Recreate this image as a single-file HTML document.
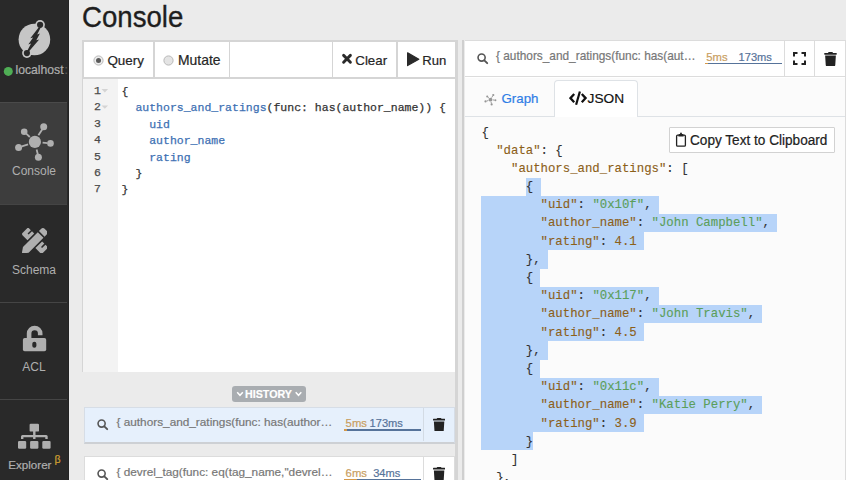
<!DOCTYPE html>
<html><head><meta charset="utf-8">
<style>
*{box-sizing:border-box;margin:0;padding:0}
html,body{width:846px;height:480px;overflow:hidden;background:#ebebeb;font-family:"Liberation Sans",sans-serif;color:#222;position:relative}
div,span,svg{position:absolute}
.t{white-space:pre;line-height:1;-webkit-text-stroke:0.2px currentColor}
#side{left:0;top:0;width:68.5px;height:480px;background:#292929;border-right:1.6px solid #232323}
.lbl{left:0;width:68px;text-align:center;color:#afafaf;font-size:12px;white-space:pre;line-height:1}
.mono{font-family:"Liberation Mono",monospace;white-space:pre;-webkit-text-stroke:0.25px currentColor}
</style></head><body>
<!-- SIDEBAR -->
<div id="side">
  <svg style="left:0;top:0.8px" width="69" height="100" viewBox="0 0 69 100">
    <circle cx="34.4" cy="38.5" r="15.8" fill="#c6c6c6"/>
    <circle cx="40.1" cy="23.8" r="4.8" fill="#c6c6c6"/>
    <circle cx="40.1" cy="23.8" r="3.1" fill="#292929"/>
    <circle cx="26.9" cy="52.1" r="4.8" fill="#c6c6c6"/>
    <circle cx="26.9" cy="52.1" r="3.1" fill="#292929"/>
    <polygon fill="#292929" points="38.8,26.2 30.3,37.3 33.1,36.5 28.3,43.4 31.1,42.5 26.6,51 28.0,51.6 39.2,38.5 36.3,39.3 39.9,32.5 37.2,33.4 40.6,26.8"/>
  </svg>
  <svg style="left:0;top:60px" width="69" height="20" viewBox="0 60 69 20">
    <circle cx="8.3" cy="71.4" r="4.5" fill="#4fae55"/>
  </svg>
  <div class="t" style="left:15.5px;top:64.4px;font-size:12.2px;color:#afafaf">localhost</div><div class="t" style="left:64.6px;top:64.4px;font-size:12.2px;color:#5a5a5a">:</div>

  <div style="left:0;top:101.5px;width:67.3px;height:103px;background:#3d3d3d;border-top:1px solid #4a4a4a;border-bottom:1px solid #444"></div>
  <svg style="left:0;top:115px" width="69" height="50" viewBox="0 115 69 50">
    <defs><g id="net">
      <circle cx="34.9" cy="141.9" r="6.1" stroke="none"/>
      <circle cx="43.7" cy="126.8" r="3.5" stroke="none"/>
      <circle cx="24.2" cy="131.8" r="3.3" stroke="none"/>
      <circle cx="50.5" cy="143.4" r="3.3" stroke="none"/>
      <circle cx="18.6" cy="147.4" r="3.5" stroke="none"/>
      <circle cx="38.4" cy="157.2" r="3.5" stroke="none"/>
      <path fill="none" d="M42.5 128.9 L38.4 135.3 M25.9 133.4 L29.8 137 M47.6 143.2 L42.6 142.7 M21.8 146.4 L28.1 144.4 M37.8 154.2 L36.6 149.5"/>
    </g></defs>
    <g fill="#afafaf" stroke="#afafaf" stroke-width="1.8"><use href="#net"/></g>
  </svg>
  <div class="lbl" style="top:165.1px">Console</div>

  <svg style="left:21.5px;top:227.5px" width="25.6" height="25.6" viewBox="0 0 512 512">
    <path fill="#afafaf" d="M109.46 244.04l134.58-134.56-44.12-44.12-61.68 61.68a7.919 7.919 0 0 1-11.21 0l-11.21-11.21c-3.1-3.1-3.1-8.120 0-11.21l61.68-61.68-33.64-33.65C131.47-3.1 111.39-3.1 99 9.29L9.290 99c-12.38 12.39-12.39 32.47 0 44.86l100.17 100.18zm388.47-116.8c18.76-18.76 18.75-49.17 0-67.93l-45.25-45.25c-18.76-18.76-49.18-18.760-67.950 0l-46.02 46.01 113.2 113.2 46.02-46.03zM316.08 82.71l-297 296.96L.32 487.11c-2.53 14.49 10.09 27.11 24.59 24.56l107.45-18.84 296.99-297-113.27-113.12zm186.63 285.43l-33.64-33.64-61.68 61.68c-3.1 3.1-8.12 3.1-11.21 0l-11.21-11.21c-3.09-3.1-3.09-8.12 0-11.21l61.68-61.68-44.14-44.140L267.93 402.5l100.21 100.2c12.39 12.39 32.47 12.39 44.86 0l89.71-89.7c12.39-12.39 12.39-32.47 0-44.86z"/>
  </svg>
  <div class="lbl" style="top:263.5px">Schema</div>
  <div style="left:0;top:301.5px;width:67.4px;height:1.2px;background:#454545"></div>

  <svg style="left:0;top:320px" width="69" height="36" viewBox="0 320 69 36">
    <path fill="none" stroke="#afafaf" stroke-width="4.6" d="M29.1 339 V333.6 a5.55 5.55 0 0 1 11.1 0 V335.2"/>
    <rect x="22.9" y="338" width="23.3" height="13.2" rx="1.8" fill="#afafaf"/>
    <rect x="32.3" y="341.8" width="4.1" height="6" rx="2" fill="#292929"/>
  </svg>
  <div class="lbl" style="top:361px">ACL</div>
  <div style="left:0;top:398.6px;width:67.4px;height:1.2px;background:#454545"></div>

  <svg style="left:0;top:420px" width="69" height="32" viewBox="0 420 69 32">
    <g fill="#afafaf">
      <rect x="29.6" y="423.8" width="9.4" height="7.8" rx="1.2"/>
      <rect x="33.1" y="431" width="2.4" height="4.5"/>
      <path d="M21 439 V436.5 a1.5 1.5 0 0 1 1.5 -1.5 H46.2 a1.5 1.5 0 0 1 1.5 1.5 V439 h-2.4 v-1.8 H23.4 V439 Z"/>
      <rect x="33.1" y="436" width="2.4" height="3"/>
      <rect x="18" y="440.9" width="8.2" height="7.9" rx="1.2"/>
      <rect x="30.1" y="440.9" width="8.3" height="7.9" rx="1.2"/>
      <rect x="42.3" y="440.9" width="8.3" height="7.9" rx="1.2"/>
    </g>
  </svg>
  <div class="t" style="left:8.3px;top:458.5px;font-size:11.6px;color:#afafaf">Explorer</div>
  <div class="t" style="left:54.6px;top:454.3px;font-size:10.6px;color:#d1a032">β</div>
</div>

<!-- TITLE -->
<div class="t" style="left:82px;top:3.2px;font-size:29px;color:#1e1e1e;transform:scaleX(0.952);transform-origin:0 0;-webkit-text-stroke:0.35px #1e1e1e">Console</div>

<!-- LEFT PANE -->
<div style="left:82px;top:40px;width:374px;height:332px;background:#fff;border-top:2px solid #d5d5d5;border-left:1.1px solid #d5d5d5"></div><div style="left:82px;top:40px;width:2px;height:38px;background:#d5d5d5"></div>
<div style="left:455.1px;top:40px;width:2.8px;height:440px;background:#d5d5d5"></div>
<!-- toolbar -->
<div style="left:82px;top:76.8px;width:374px;height:2px;background:#d5d5d5"></div>
<div style="left:152.5px;top:41px;width:2px;height:36px;background:#d5d5d5"></div>
<div style="left:228.8px;top:41px;width:1.4px;height:36px;background:#d5d5d5"></div>
<div style="left:332px;top:41px;width:1.4px;height:36px;background:#d5d5d5"></div>
<div style="left:396.2px;top:41px;width:2px;height:36px;background:#d5d5d5"></div>
<svg style="left:92.5px;top:54.5px" width="12" height="12" viewBox="0 0 12 12"><circle cx="5.5" cy="5.5" r="4.6" fill="#ececec" stroke="#b8b8b8" stroke-width="1"/><circle cx="5.5" cy="5.5" r="2.5" fill="#5a5a5a"/></svg>
<div class="t" style="left:107.4px;top:53.6px;font-size:13.45px;color:#262626">Query</div>
<svg style="left:162.8px;top:54.7px" width="12" height="12" viewBox="0 0 12 12"><circle cx="5.5" cy="5.5" r="4.6" fill="#e4e4e4" stroke="#b8b8b8" stroke-width="1"/></svg>
<div class="t" style="left:178px;top:53.5px;font-size:13.9px;color:#262626">Mutate</div>
<svg style="left:341px;top:53.4px" width="12" height="12" viewBox="0 0 12 12"><path d="M2.6 2.4 L9.4 9.2 M9.4 2.4 L2.6 9.2" stroke="#2a2a2a" stroke-width="2.9" stroke-linecap="round"/></svg>
<div class="t" style="left:355.3px;top:53.7px;font-size:13.3px;color:#262626">Clear</div>
<svg style="left:405.5px;top:51px" width="14" height="16" viewBox="0 0 14 16"><path d="M1.6 1.8 L12.8 8.2 L1.6 14.6 Z" fill="#2a2a2a" stroke="#2a2a2a" stroke-width="1.2" stroke-linejoin="round"/></svg>
<div class="t" style="left:422.3px;top:53.7px;font-size:13.1px;color:#262626">Run</div>
<!-- editor -->
<div style="left:83.1px;top:78.8px;width:34.8px;height:293.2px;background:#f3f3f3"></div>
<div class="mono" style="left:83.6px;top:82.7px;width:17.3px;text-align:right;font-size:11.5px;line-height:16.45px;color:#4a4a4a">1
2
3
4
5
6
7</div>
<svg style="left:101px;top:88px" width="8" height="24" viewBox="0 0 8 24"><path d="M0.5 1.1 h6.6 l-3.3 3.3z M0.5 17.5 h6.6 l-3.3 3.3z" fill="#d4d4d4"/></svg>
<div class="mono" style="left:121.6px;top:83.7px;font-size:11.5px;line-height:16.45px;color:#333">{
  <span style="position:static;color:#3d70b3">authors_and_ratings</span>(func: has(author_name)) {
    <span style="position:static;color:#3d70b3">uid</span>
    <span style="position:static;color:#3d70b3">author_name</span>
    <span style="position:static;color:#3d70b3">rating</span>
  }
}</div>

<!-- HISTORY -->
<div style="left:232px;top:386px;width:74px;height:15.6px;background:#a9adb1;border-radius:3px"></div>
<svg style="left:236px;top:389px" width="70" height="10" viewBox="0 0 70 10"><path d="M1.2 3.3 L4 6.3 L6.8 3.3 M59.7 3.3 L62.5 6.3 L65.3 3.3" fill="none" stroke="#fff" stroke-width="1.5"/></svg>
<div class="t" style="left:245px;top:388.6px;font-size:10.7px;font-weight:bold;color:#fff">HISTORY</div>

<div style="left:83.8px;top:406.6px;width:370.8px;height:37px;background:#e6f0fc;border:1px solid #d6dde6;border-bottom:2px solid #cdd0d4"></div>
<div style="left:423px;top:407.5px;width:1px;height:33px;background:#d3dbe4"></div>
<svg style="left:96.65px;top:418.65px" width="12" height="12" viewBox="0 0 12 12"><circle cx="4.6" cy="4.6" r="3.55" fill="none" stroke="#555" stroke-width="1.6"/><path d="M7.3 7.3 L10.2 10.2" stroke="#555" stroke-width="1.9" stroke-linecap="round"/></svg>
<div class="t" style="left:116.5px;top:417px;font-size:11.8px;color:#777">{ authors_and_ratings(func: has(author…</div>
<div class="t" style="left:345.6px;top:417.6px;font-size:11.3px;color:#c99e5f">5ms</div>
<div class="t" style="left:369.6px;top:417.6px;font-size:11.1px;color:#56739a">173ms</div>
<div style="left:343.8px;top:429.4px;width:77.3px;height:1.5px;background:#56739a"></div>
<div style="left:343.8px;top:429.4px;width:3px;height:1.5px;background:#d69a4a"></div>
<svg style="left:433.1px;top:417.5px" width="12.2" height="13.9" viewBox="0 0 448 512"><path fill="#222" d="M432 32H312l-9.4-18.7A24 24 0 0 0 281.1 0H166.8a23.72 23.72 0 0 0-21.4 13.3L136 32H16A16 16 0 0 0 0 48v32a16 16 0 0 0 16 16h416a16 16 0 0 0 16-16V48a16 16 0 0 0-16-16zM53.2 467a48 48 0 0 0 47.9 45h245.8a48 48 0 0 0 47.9-45L416 128H32z"/></svg>

<div style="left:83.8px;top:455.8px;width:370.8px;height:37px;background:#fff;border:1px solid #dcdcdc"></div>
<div style="left:423px;top:457px;width:1px;height:33px;background:#dcdcdc"></div>
<svg style="left:96.65px;top:468.55px" width="12" height="12" viewBox="0 0 12 12"><circle cx="4.6" cy="4.6" r="3.55" fill="none" stroke="#555" stroke-width="1.6"/><path d="M7.3 7.3 L10.2 10.2" stroke="#555" stroke-width="1.9" stroke-linecap="round"/></svg>
<div class="t" style="left:116.5px;top:466.8px;font-size:11.8px;color:#777">{ devrel_tag(func: eq(tag_name,"devrel…</div>
<div class="t" style="left:345.6px;top:467.6px;font-size:11.3px;color:#c99e5f">6ms</div>
<div class="t" style="left:373.2px;top:467.6px;font-size:11.1px;color:#56739a">34ms</div>
<div style="left:343.8px;top:478.8px;width:77.3px;height:1.5px;background:#56739a"></div>
<div style="left:343.8px;top:478.8px;width:12.8px;height:1.5px;background:#d69a4a"></div>
<svg style="left:433.1px;top:467px" width="12.2" height="13.9" viewBox="0 0 448 512"><path fill="#222" d="M432 32H312l-9.4-18.7A24 24 0 0 0 281.1 0H166.8a23.72 23.72 0 0 0-21.4 13.3L136 32H16A16 16 0 0 0 0 48v32a16 16 0 0 0 16 16h416a16 16 0 0 0 16-16V48a16 16 0 0 0-16-16zM53.2 467a48 48 0 0 0 47.9 45h245.8a48 48 0 0 0 47.9-45L416 128H32z"/></svg>

<!-- SPLITTER -->
<div style="left:461.8px;top:40px;width:2.7px;height:440px;background:#cfcfcf"></div>

<!-- RIGHT PANE -->
<div style="left:464.5px;top:40px;width:381.5px;height:440px;background:#fff;border-top:1px solid #dcdcdc"></div>
<div style="left:845px;top:40px;width:1px;height:440px;background:#dcdcdc"></div>
<svg style="left:476.85px;top:53.15px" width="12" height="12" viewBox="0 0 12 12"><circle cx="4.6" cy="4.6" r="3.55" fill="none" stroke="#555" stroke-width="1.6"/><path d="M7.3 7.3 L10.2 10.2" stroke="#555" stroke-width="1.9" stroke-linecap="round"/></svg>
<div class="t" style="left:496px;top:50.6px;font-size:11.85px;color:#777">{ authors_and_ratings(func: has(aut…</div>
<div class="t" style="left:706.3px;top:52.4px;font-size:11.3px;color:#c99e5f">5ms</div>
<div class="t" style="left:738.6px;top:52.4px;font-size:11.1px;color:#56739a">173ms</div>
<div style="left:704.5px;top:63.1px;width:77.5px;height:1.4px;background:#56739a"></div>
<div style="left:704.5px;top:63.1px;width:3.5px;height:1.4px;background:#d69a4a"></div>
<div style="left:784.2px;top:41px;width:1px;height:36px;background:#dcdcdc"></div>
<div style="left:814.2px;top:41px;width:1px;height:36px;background:#dcdcdc"></div>
<svg style="left:793px;top:52.3px" width="13" height="13" viewBox="0 0 13 13"><path d="M1 4.5 V1 H4.5 M8.5 1 H12 V4.5 M12 8.5 V12 H8.5 M4.5 12 H1 V8.5" fill="none" stroke="#222" stroke-width="2"/></svg>
<svg style="left:824px;top:51.5px" width="13" height="14.3" viewBox="0 0 448 512"><path fill="#222" d="M432 32H312l-9.4-18.7A24 24 0 0 0 281.1 0H166.8a23.72 23.72 0 0 0-21.4 13.3L136 32H16A16 16 0 0 0 0 48v32a16 16 0 0 0 16 16h416a16 16 0 0 0 16-16V48a16 16 0 0 0-16-16zM53.2 467a48 48 0 0 0 47.9 45h245.8a48 48 0 0 0 47.9-45L416 128H32z"/></svg>
<div style="left:465px;top:76px;width:380px;height:1.2px;background:#dcdcdc"></div>
<!-- tabs -->
<div style="left:465px;top:77.5px;width:380px;height:39px;background:#fbfbfb"></div>
<div style="left:465px;top:116px;width:380px;height:1px;background:#dee2e6"></div>
<div style="left:554.3px;top:80px;width:84px;height:37px;background:#fff;border:1px solid #dee2e6;border-bottom:none;border-radius:4px 4px 0 0"></div>
<svg style="left:480px;top:88px" width="20" height="22" viewBox="0 0 20 22"><g transform="translate(10.55 11.7) scale(0.31) translate(-34.9 -141.9)" fill="#959595" stroke="#959595" stroke-width="3"><use href="#net"/></g></svg>
<div class="t" style="left:501.5px;top:92px;font-size:13.3px;color:#2f7ee6">Graph</div>
<svg style="left:569px;top:91px" width="19" height="15" viewBox="0 0 19 15"><path d="M5.2 3 L1.4 7.1 L5.2 11.2 M12.8 3 L16.6 7.1 L12.8 11.2" fill="none" stroke="#111" stroke-width="2.3"/><path d="M10.9 0.5 L7.1 13.7" stroke="#111" stroke-width="2.2"/></svg>
<div class="t" style="left:587.6px;top:91.8px;font-size:13.7px;color:#111">JSON</div>
<!-- json content -->
<div style="left:465px;top:117px;width:380px;height:363px;background:#fbfbfb"></div>
<!-- selection -->
<div style="left:526px;top:177.60px;width:15px;height:18.24px;background:#b7d4f9"></div>
<div style="left:481.3px;top:195.79px;width:177.6px;height:18.24px;background:#b7d4f9"></div>
<div style="left:481.3px;top:213.98px;width:296.0px;height:18.24px;background:#b7d4f9"></div>
<div style="left:481.3px;top:232.17px;width:162.8px;height:18.24px;background:#b7d4f9"></div>
<div style="left:481.3px;top:250.36px;width:66.6px;height:18.24px;background:#b7d4f9"></div>
<div style="left:481.3px;top:268.55px;width:59.2px;height:18.24px;background:#b7d4f9"></div>
<div style="left:481.3px;top:286.74px;width:177.6px;height:18.24px;background:#b7d4f9"></div>
<div style="left:481.3px;top:304.93px;width:281.2px;height:18.24px;background:#b7d4f9"></div>
<div style="left:481.3px;top:323.12px;width:162.8px;height:18.24px;background:#b7d4f9"></div>
<div style="left:481.3px;top:341.31px;width:66.6px;height:18.24px;background:#b7d4f9"></div>
<div style="left:481.3px;top:359.50px;width:59.2px;height:18.24px;background:#b7d4f9"></div>
<div style="left:481.3px;top:377.69px;width:177.6px;height:18.24px;background:#b7d4f9"></div>
<div style="left:481.3px;top:395.88px;width:281.2px;height:18.24px;background:#b7d4f9"></div>
<div style="left:481.3px;top:414.07px;width:162.8px;height:18.24px;background:#b7d4f9"></div>
<div style="left:481.3px;top:432.26px;width:51.8px;height:18.24px;background:#b7d4f9"></div>
<div class="mono" style="left:481.4px;top:123.5px;font-size:12.33px;line-height:18.19px;color:#333;-webkit-text-stroke:0.12px currentColor">{
  <b style="font-weight:normal;color:#8c6019">"data"</b>: {
    <b style="font-weight:normal;color:#8c6019">"authors_and_ratings"</b>: [
      {
        <b style="font-weight:normal;color:#8c6019">"uid"</b>: <b style="font-weight:normal;color:#5b9e5b">"0x10f"</b>,
        <b style="font-weight:normal;color:#8c6019">"author_name"</b>: <b style="font-weight:normal;color:#5b9e5b">"John Campbell"</b>,
        <b style="font-weight:normal;color:#8c6019">"rating"</b>: <b style="font-weight:normal;color:#8c6019">4.1</b>
      },
      {
        <b style="font-weight:normal;color:#8c6019">"uid"</b>: <b style="font-weight:normal;color:#5b9e5b">"0x117"</b>,
        <b style="font-weight:normal;color:#8c6019">"author_name"</b>: <b style="font-weight:normal;color:#5b9e5b">"John Travis"</b>,
        <b style="font-weight:normal;color:#8c6019">"rating"</b>: <b style="font-weight:normal;color:#8c6019">4.5</b>
      },
      {
        <b style="font-weight:normal;color:#8c6019">"uid"</b>: <b style="font-weight:normal;color:#5b9e5b">"0x11c"</b>,
        <b style="font-weight:normal;color:#8c6019">"author_name"</b>: <b style="font-weight:normal;color:#5b9e5b">"Katie Perry"</b>,
        <b style="font-weight:normal;color:#8c6019">"rating"</b>: <b style="font-weight:normal;color:#8c6019">3.9</b>
      }
    ]
  },
}</div>
<!-- copy button -->
<div style="left:668.8px;top:127.3px;width:166px;height:25.4px;background:#fff;border:1px solid #d2d2d2;border-radius:1px"></div>
<svg style="left:674px;top:131px" width="14" height="17" viewBox="674 131 14 17"><rect x="676.6" y="135.2" width="8.8" height="11" rx="1" fill="none" stroke="#222" stroke-width="1.3"/><path d="M678.4 136.6 V135.2 Q678.4 134 679.6 134 H680 Q680.2 132.6 681 132.6 Q681.8 132.6 682 134 H682.4 Q683.6 134 683.6 135.2 V136.6 Z" fill="#222"/></svg>
<div class="t" style="left:689.6px;top:132.9px;font-size:14px;color:#222;transform:scaleX(0.972);transform-origin:0 0">Copy Text to Clipboard</div>
</body></html>
